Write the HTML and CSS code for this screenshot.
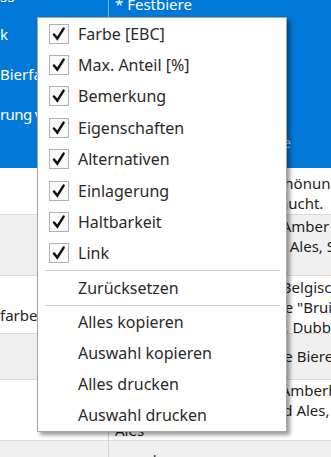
FILE: index.html
```html
<!DOCTYPE html>
<html lang="de">
<head>
<meta charset="utf-8">
<title>Kontextmenü</title>
<link rel="stylesheet" href="styles.css">
</head>
<body>
<div class="table">
  <div class="row sel r1">
    <div class="cell left"><div class="ll top">ss</div><div class="ll">k</div><div class="ll">Bierfarbe</div><div class="ll narrow">rung vor</div></div>
    <div class="cell right"><div class="ln first">* Festbiere</div><div class="tail">Spezialbiere</div></div>
  </div>
  <div class="row w r2">
    <div class="cell left"></div>
    <div class="cell right"><div class="ln">Wird auch zur Farbverschönung</div><div class="ln">Wird als Farbebier gebraucht.</div></div>
  </div>
  <div class="row g r3">
    <div class="cell left"></div>
    <div class="cell right"><div class="ln">Rote und braune Biere, Amber</div><div class="ln">Englische und US Brown Ales, Scotch Ales</div></div>
  </div>
  <div class="row w r4">
    <div class="cell left"><div class="lf">farbe</div></div>
    <div class="cell right"><div class="ln">Dunkle Biere, Alt, Bock, Belgische</div><div class="ln">Abteibiere und Flämische "Bruin"</div><div class="ln">Belgische Oud Bruin Ale, Dubbel</div></div>
  </div>
  <div class="row g r5">
    <div class="cell left"></div>
    <div class="cell right"><div class="ln">Sehr dunkle bis schwarze Biere</div></div>
  </div>
  <div class="row w r6">
    <div class="cell left"></div>
    <div class="cell right"><div class="ln">Rötliche Biere, Märzen, Amberbier</div><div class="ln">Scotch Ales und Irish Red Ales,</div><div class="ln">Ales</div></div>
  </div>
  <div class="row g r7">
    <div class="cell left"></div>
    <div class="cell right"><div class="ln">ganz homogen</div></div>
  </div>
</div>

<ul class="menu">
  <li class="item"><span class="chk"><svg viewBox="0 0 18 18" width="18" height="18"><path d="M4 9.5 L7.3 13.6 L13.6 3.6" /></svg></span><span class="lbl">Farbe [EBC]</span></li>
  <li class="item"><span class="chk"><svg viewBox="0 0 18 18" width="18" height="18"><path d="M4 9.5 L7.3 13.6 L13.6 3.6" /></svg></span><span class="lbl">Max. Anteil [%]</span></li>
  <li class="item"><span class="chk"><svg viewBox="0 0 18 18" width="18" height="18"><path d="M4 9.5 L7.3 13.6 L13.6 3.6" /></svg></span><span class="lbl">Bemerkung</span></li>
  <li class="item"><span class="chk"><svg viewBox="0 0 18 18" width="18" height="18"><path d="M4 9.5 L7.3 13.6 L13.6 3.6" /></svg></span><span class="lbl">Eigenschaften</span></li>
  <li class="item"><span class="chk"><svg viewBox="0 0 18 18" width="18" height="18"><path d="M4 9.5 L7.3 13.6 L13.6 3.6" /></svg></span><span class="lbl">Alternativen</span></li>
  <li class="item"><span class="chk"><svg viewBox="0 0 18 18" width="18" height="18"><path d="M4 9.5 L7.3 13.6 L13.6 3.6" /></svg></span><span class="lbl">Einlagerung</span></li>
  <li class="item"><span class="chk"><svg viewBox="0 0 18 18" width="18" height="18"><path d="M4 9.5 L7.3 13.6 L13.6 3.6" /></svg></span><span class="lbl">Haltbarkeit</span></li>
  <li class="item"><span class="chk"><svg viewBox="0 0 18 18" width="18" height="18"><path d="M4 9.5 L7.3 13.6 L13.6 3.6" /></svg></span><span class="lbl">Link</span></li>
  <li class="sep"></li>
  <li class="item plain"><span class="lbl">Zurücksetzen</span></li>
  <li class="sep"></li>
  <li class="item plain low"><span class="lbl">Alles kopieren</span></li>
  <li class="item plain low"><span class="lbl">Auswahl kopieren</span></li>
  <li class="item plain low"><span class="lbl">Alles drucken</span></li>
  <li class="item plain low"><span class="lbl">Auswahl drucken</span></li>
</ul>
</body>
</html>
```
FILE: styles.css
```css
html, body {
  margin: 0;
  padding: 0;
}
body {
  width: 331px;
  height: 457px;
  overflow: hidden;
  position: relative;
  background: #ffffff;
  font-family: "Noto Sans", "Open Sans", sans-serif;
  color: #1e1e1e;
}

/* background table */
.table {
  display: flex;
  flex-direction: column;
  font-size: 15px;
}
.row {
  box-sizing: border-box;
  display: grid;
  grid-template-columns: 109px 1fr;
  border-bottom: 1px solid #dcdcdc;
  overflow: hidden;
  flex: none;
}
.row.w { background: #ffffff; }
.row.g { background: #f0f0f0; }
.row.sel {
  background: #0078d7;
  color: #ffffff;
  border-bottom: none;
}
.cell {
  overflow: hidden;
  white-space: nowrap;
}
.cell.left {
  border-right: 1px solid #d6d6d6;
}
.sel .cell.left {
  border-right-color: rgba(255,255,255,0.45);
}
.cell.right {
  padding-left: 6px;
}
.ln {
  line-height: 20px;
}

.r1 { height: 190px; margin-top: -22px; }
.r1 .ll { line-height: 40px; }
.r1 .ll.top { line-height: 36px; }
.r1 .ll.narrow { letter-spacing: -0.6px; }
.r1 .ln.first { padding-top: 16px; line-height: 20px; }
.r1 .tail {
  width: 176px;
  text-align: right;
  margin-top: 119px;
  line-height: 18px;
  color: rgba(255,255,255,0.7);
}
.r2 { height: 47px; }
.r2 .right { padding-top: 5px; }
.r3 { height: 61px; }
.r3 .right { padding-top: 1px; }
.r4 { height: 58px; }
.r4 .right { padding-top: 1px; }
.r4 .left { padding-top: 29px; line-height: 20px; }
.r5 { height: 46px; }
.r5 .right { padding-top: 12px; }
.r6 { height: 61px; }
.r6 .right { padding-top: 0; }
.r7 { height: 40px; }
.r7 .right { padding-top: 9px; }

/* context menu */
.menu {
  position: absolute;
  left: 37px;
  top: 17px;
  width: 248px;
  margin: 0;
  padding: 0;
  list-style: none;
  background: #ffffff;
  border: 1px solid #a6a6a6;
  box-shadow: 3px 3px 4px rgba(0,0,0,0.4);
  font-size: 16px;
  color: #2a2a2a;
}
.item {
  display: flex;
  align-items: center;
  height: 31.4px;
}
.item.low { height: 31px; }
.chk {
  box-sizing: border-box;
  width: 20px;
  height: 20px;
  margin-left: 11px;
  border: 1px solid #b0b0b0;
  background: #fafafa;
  display: flex;
}
.chk path {
  fill: none;
  stroke: #111111;
  stroke-width: 2.5;
  stroke-linecap: round;
  stroke-linejoin: miter;
}
.lbl {
  margin-left: 9px;
  white-space: nowrap;
}
.item.plain .lbl { margin-left: 40px; }
.sep {
  height: 1px;
  margin: 1px 6px 1px 7px;
  background: #d0d0d0;
}
```
